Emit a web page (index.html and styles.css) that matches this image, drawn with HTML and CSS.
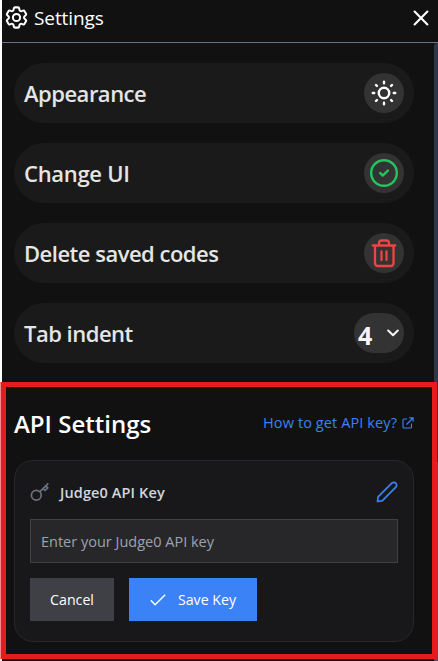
FILE: index.html
```html
<!DOCTYPE html>
<html lang="en">
<head>
<meta charset="utf-8">
<title>Settings</title>
<link rel="stylesheet" href="styles.css">
</head>
<body>
<div class="panel">
  <header class="header">
    <svg class="gear" width="27" height="27" viewBox="0 0 24 24" fill="none" stroke="currentColor" stroke-width="1.8" stroke-linejoin="round"><path d="M9.594 3.94c.09-.542.56-.94 1.11-.94h2.593c.55 0 1.02.398 1.11.94l.213 1.281c.063.374.313.686.645.87.074.04.147.083.22.127.325.196.72.257 1.075.124l1.217-.456a1.125 1.125 0 0 1 1.37.49l1.296 2.247a1.125 1.125 0 0 1-.26 1.431l-1.003.827c-.293.241-.438.613-.43.992a7.723 7.723 0 0 1 0 .255c-.008.378.137.75.43.991l1.004.827c.424.35.534.955.26 1.43l-1.298 2.247a1.125 1.125 0 0 1-1.369.491l-1.217-.456c-.355-.133-.75-.072-1.076.124a6.47 6.47 0 0 1-.22.128c-.331.183-.581.495-.644.869l-.213 1.281c-.09.543-.56.94-1.11.94h-2.594c-.55 0-1.019-.398-1.11-.94l-.213-1.281c-.062-.374-.312-.686-.644-.87a6.52 6.52 0 0 1-.22-.127c-.325-.196-.72-.257-1.076-.124l-1.217.456a1.125 1.125 0 0 1-1.369-.49l-1.297-2.247a1.125 1.125 0 0 1 .26-1.431l1.004-.827c.292-.24.437-.613.43-.991a6.932 6.932 0 0 1 0-.255c.007-.38-.138-.751-.43-.992l-1.004-.827a1.125 1.125 0 0 1-.26-1.43l1.297-2.247a1.125 1.125 0 0 1 1.37-.491l1.216.456c.356.133.751.072 1.076-.124.072-.044.146-.086.22-.128.332-.183.582-.495.644-.869l.214-1.28Z"/><circle cx="12" cy="12" r="3.2"/></svg>
    <span class="title">Settings</span>
    <svg class="close" width="16" height="16" viewBox="0 0 16 16" fill="none" stroke="currentColor" stroke-width="2.1" stroke-linecap="round"><path d="M1.6 1.6l12.8 12.8M14.4 1.6L1.6 14.4"/></svg>
  </header>
  <main class="content">
    <section class="rows">
      <div class="row"><span class="label">Appearance</span>
        <span class="round"><svg width="26" height="26" viewBox="0 0 26 26" fill="none" stroke="currentColor" stroke-width="2.4"><circle cx="13" cy="13" r="5.2"/><path stroke-linecap="round" d="M13 1.8v1.4M13 22.8v1.4M1.8 13h1.4M22.8 13h1.4M5 5l.9.9M20.1 20.1l.9.9M5 21l.9-.9M20.1 5.9L21 5"/></svg></span></div>
      <div class="row"><span class="label wide">Change UI</span>
        <span class="round green"><svg width="30" height="30" viewBox="0 0 30 30" fill="none" stroke="currentColor" stroke-width="2.4" stroke-linecap="round" stroke-linejoin="round"><circle cx="15" cy="15" r="12.8"/><path d="M11.2 15.1l2.5 2.5 5.2-5"/></svg></span></div>
      <div class="row"><span class="label">Delete saved codes</span>
        <span class="round red"><svg width="30" height="30" viewBox="0 0 30 30" fill="none" stroke="currentColor" stroke-width="2.3" stroke-linecap="round" stroke-linejoin="round"><path d="M3.8 7.5h22.4M6 7.5V25q0 3 3 3h12.5q3 0 3-3V7.5M10 7V5.3Q10 2.5 12.8 2.5h4.4Q20 2.5 20 5.3V7M12.5 13.5v8.5M17.5 13.5v8.5"/></svg></span></div>
      <div class="row"><span class="label">Tab indent</span>
        <span class="select"><span class="value">4</span><svg width="12" height="8" viewBox="0 0 12 8" fill="none" stroke="currentColor" stroke-width="2" stroke-linecap="round" stroke-linejoin="round"><path d="M1.2 1.5L6 6.2l4.8-4.7"/></svg></span></div>
    </section>
    <section class="api">
      <div class="api-head">
        <h2>API Settings</h2>
        <a class="help"><span>How to get API key?</span><svg width="12" height="12" viewBox="0 0 12 12" fill="none" stroke="currentColor" stroke-width="1.1"><path d="M5 2H2Q1 2 1 3v7q0 1 1 1h6.5q1 0 1-1V6.5M4.5 7.5l6.5-6.5M7.3.9h3.8v3.8"/></svg></a>
      </div>
      <div class="card">
        <div class="card-head">
          <svg class="key" width="20" height="20" viewBox="0 0 20 20" fill="none" stroke="currentColor" stroke-width="1.7" stroke-linejoin="round" stroke-linecap="round"><circle cx="6.3" cy="13.2" r="4.9"/><path d="M10 9.6L17.8 1.9M13.2 6.5l1.8 2 2.8-2.7-2-1.8"/></svg>
          <span class="key-label">Judge0 API Key</span>
          <svg class="pencil" width="22" height="22" viewBox="0 0 22 22" fill="none" stroke="currentColor" stroke-width="1.7" stroke-linejoin="round"><path d="M1.5 20.5l.6-4.7L15.8 2.2q2.1-1.8 4 0 1.7 2 0 4L6.2 19.8z"/></svg>
        </div>
        <input class="field" type="text" placeholder="Enter your Judge0 API key">
        <div class="actions">
          <button class="cancel">Cancel</button>
          <button class="save"><svg width="16" height="12" viewBox="0 0 16 12" fill="none" stroke="currentColor" stroke-width="1.5"><path d="M.8 6.2l4.3 4.5L15.2.8"/></svg><span>Save Key</span></button>
        </div>
      </div>
    </section>
  </main>
  <div class="scrollbar"></div>
  <div class="highlight"></div>
</div>
</body>
</html>
```
FILE: styles.css
```css
* { box-sizing: border-box; }
body { margin: 0; background: #fff; font-family: "Open Sans", "Noto Sans", sans-serif; overflow: hidden; }
.panel { height: 661px; margin-left: 2px; background: #111; color: #fff; }
.header { height: 43px; border-bottom: 1px solid #64748b; display: flex; align-items: flex-start; padding: 4px 8px 0 1px; }
.title { margin: 0 0 0 4px; font-size: 19px; line-height: 28px; letter-spacing: -.1px; }
.close { margin: 6px 1px 0 auto; }
.content { padding: 20px 24px 0 12px; }
.rows { display: flex; flex-direction: column; gap: 20px; }
.row { height: 60px; border-radius: 30px; background: #1a1a1a; display: flex; align-items: center; justify-content: space-between; padding: 0 10px; }
.label { font-size: 22px; font-weight: 600; color: #e5e5e5; line-height: 30px; letter-spacing: -.5px; }
.wide { letter-spacing: -.3px; }
.round { width: 40px; height: 40px; border-radius: 50%; background: #333; display: grid; place-items: center; }
.green { color: #22c55e; }
.red { color: #ef4444; }
.select { width: 50px; height: 40px; border-radius: 20px; background: #333; display: flex; align-items: center; justify-content: space-between; padding: 0 5px 0 4px; font-size: 25px; font-weight: 700; color: #f5f5f5; }
.value { padding-top: 3px; }
.api { padding-top: 43px; }
.api-head { height: 36px; display: flex; align-items: center; justify-content: space-between; }
h2 { margin: 0; font-size: 24px; line-height: 32px; font-weight: 600; }
.help { display: flex; align-items: center; gap: 5px; color: #3b82f6; font-size: 14.5px; line-height: 20px; letter-spacing: .1px; margin-top: -2px; }
.card { margin-top: 18px; height: 182px; border: 1px solid #27272a; border-radius: 19px; background: #18181b; padding: 16px 15px 0; }
.card-head { display: flex; height: 30px; align-items: center; }
.key { color: #6b7280; }
.key-label { margin-left: 10px; font-size: 14.5px; font-weight: 600; color: #d1d5db; letter-spacing: .12px; }
.pencil { margin-left: auto; color: #3b82f6; }
.field { display: block; width: 100%; height: 44px; margin-top: 12px; padding: 0 10px; border: 1px solid #3f3f46; border-radius: 0; background: #27272a; color: #fff; font: 14.5px "Open Sans", sans-serif; }
.field::placeholder { color: #9ca3af; }
.actions { display: flex; gap: 15px; margin-top: 15px; }
button { height: 43px; border: 0; padding: 0; color: #fff; font: 14.2px "Open Sans", sans-serif; white-space: nowrap; }
.cancel { width: 84px; background: #3f3f46; }
.save { width: 128px; background: #3b82f6; display: flex; align-items: center; justify-content: center; gap: 12px; }
.scrollbar { position: absolute; left: 434px; top: 43px; width: 4px; height: 618px; background: linear-gradient(#2d3748 419px, #4a5560 419px); border-radius: 3px 0 0 0; }
.highlight { position: absolute; left: 1px; top: 382px; width: 436px; height: 277px; border: 5px solid #e81c1c; outline: 1px solid rgba(232, 28, 28, .35); outline-offset: -1px; }
.highlight { border-color: #e61b1b; box-shadow: -1px 0 0 rgba(232, 28, 28, .5); }
```
